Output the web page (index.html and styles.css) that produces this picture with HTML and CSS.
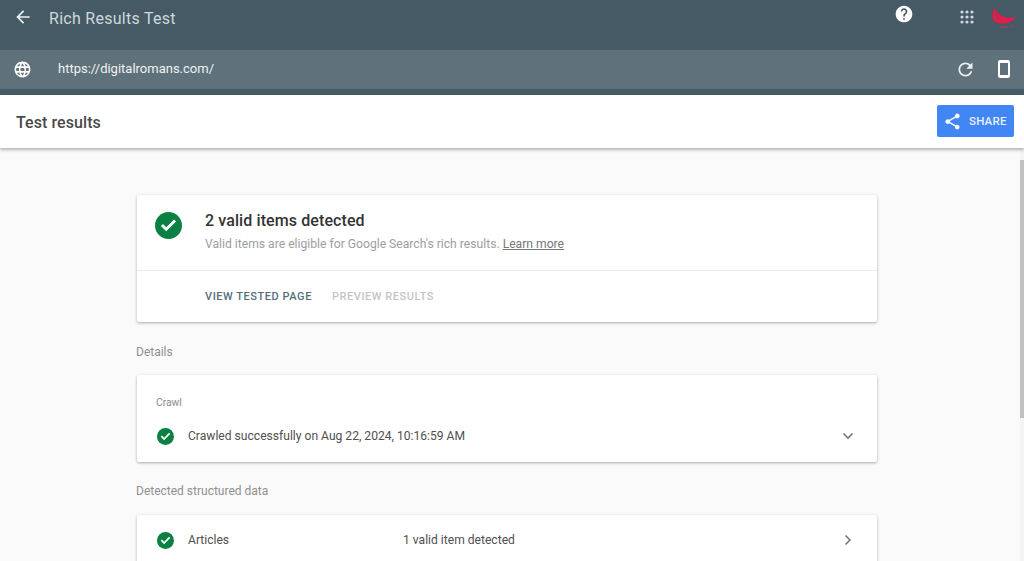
FILE: index.html
```html
<!DOCTYPE html>
<html lang="en">
<head>
<meta charset="utf-8">
<title>Rich Results Test</title>
<link rel="stylesheet" href="styles.css">
</head>
<body>
<header class="topbar">
  <div class="titlerow">
    <svg class="back" viewBox="0 0 24 24"><path d="M20 11H7.83l5.59-5.59L12 4l-8 8 8 8 1.41-1.41L7.83 13H20z"/></svg>
    <span class="apptitle">Rich Results Test</span>
    <span class="spacer"></span>
    <svg class="help" viewBox="0 0 24 24"><path d="M12 2C6.48 2 2 6.48 2 12s4.48 10 10 10 10-4.48 10-10S17.52 2 12 2zm1 17h-2v-2h2v2zm2.07-7.75l-.9.92C13.45 12.9 13 13.5 13 15h-2v-.5c0-1.1.45-2.1 1.17-2.83l1.24-1.26c.37-.36.59-.86.59-1.41 0-1.1-.9-2-2-2s-2 .9-2 2H8c0-2.21 1.79-4 4-4s4 1.79 4 4c0 .88-.36 1.68-.93 2.25z"/></svg>
    <svg class="apps" viewBox="0 0 14 14"><g><circle cx="2" cy="2" r="1.6"/><circle cx="7" cy="2" r="1.6"/><circle cx="12" cy="2" r="1.6"/><circle cx="2" cy="7" r="1.6"/><circle cx="7" cy="7" r="1.6"/><circle cx="12" cy="7" r="1.6"/><circle cx="2" cy="12" r="1.6"/><circle cx="7" cy="12" r="1.6"/><circle cx="12" cy="12" r="1.6"/></g></svg>
    <svg class="logo" viewBox="0 0 26 24"><path d="M4 1C1 5 0 11 4 15c4 2 10 2 13 1 3-1 6-3 8-6-4 1-8 1-11 0C10 9 6 6 4 1z" fill="#dc1f4b"/><path d="M5 6c1 3 3 6 6 8" stroke="#8c3a58" stroke-width=".7" fill="none"/><path d="M9 20h9M20 19h2" stroke="#c9375c" stroke-width="1.100" stroke-dasharray="1.500 .6" fill="none"/></svg>
  </div>
  <div class="urlrow">
    <svg class="globe" viewBox="0 0 24 24"><path d="M11.99 2C6.47 2 2 6.48 2 12s4.47 10 9.99 10C17.52 22 22 17.52 22 12S17.52 2 11.99 2zm6.93 6h-2.95c-.32-1.25-.78-2.45-1.38-3.56 1.84.63 3.37 1.91 4.33 3.56zM12 4.04c.83 1.2 1.48 2.53 1.91 3.96h-3.82c.43-1.43 1.08-2.76 1.91-3.96zM4.26 14C4.1 13.36 4 12.69 4 12s.1-1.36.26-2h3.38c-.08.66-.14 1.32-.14 2s.06 1.34.14 2H4.26zm.82 2h2.95c.32 1.25.78 2.45 1.38 3.56-1.84-.63-3.37-1.9-4.33-3.56zm2.95-8H5.08c.96-1.66 2.49-2.93 4.33-3.56C8.81 5.55 8.35 6.75 8.03 8zM12 19.96c-.83-1.2-1.48-2.53-1.91-3.96h3.82c-.43 1.43-1.08 2.76-1.91 3.96zM14.34 14H9.66c-.09-.66-.16-1.32-.16-2s.07-1.35.16-2h4.68c.09.65.16 1.32.16 2s-.07 1.34-.16 2zm.25 5.56c.6-1.11 1.06-2.31 1.38-3.56h2.95c-.96 1.65-2.49 2.93-4.33 3.56zM16.36 14c.08-.66.14-1.32.14-2s-.06-1.34-.14-2h3.38c.16.64.26 1.31.26 2s-.1 1.36-.26 2h-3.38z"/></svg>
    <span class="url">https://digitalromans.com/</span>
    <span class="spacer"></span>
    <svg class="reload" viewBox="0 0 24 24"><path d="M17.65 6.35C16.2 4.9 14.21 4 12 4c-4.42 0-7.99 3.58-7.99 8s3.57 8 7.99 8c3.73 0 6.84-2.55 7.73-6h-2.08c-.82 2.33-3.04 4-5.65 4-3.31 0-6-2.69-6-6s2.69-6 6-6c1.66 0 3.14.69 4.22 1.78L13 11h7V4l-2.35 2.35z"/></svg>
    <svg class="phone" viewBox="0 0 12 18"><path d="M10 0H2C.9 0 0 .9 0 2v14c0 1.100.9 2 2 2h8c1.100 0 2-.9 2-2V2c0-1.100-.9-2-2-2zm0 15H2V3h8v12z"/></svg>
  </div>
</header>
<section class="resultsbar">
  <h1 class="resultstitle">Test results</h1>
  <button class="share">
    <svg class="shareicon" viewBox="0 0 24 24"><path d="M18 16.08c-.76 0-1.44.3-1.96.77L8.910 12.700c.05-.23.09-.46.09-.7s-.04-.47-.09-.7l7.050-4.110c.54.5 1.250.81 2.040.81 1.660 0 3-1.340 3-3s-1.340-3-3-3-3 1.340-3 3c0 .24.040.47.090.7L8.040 9.810C7.500 9.310 6.790 9 6 9c-1.660 0-3 1.340-3 3s1.340 3 3 3c.79 0 1.500-.31 2.040-.81l7.120 4.160c-.05.21-.08.43-.08.65 0 1.610 1.310 2.920 2.920 2.920s2.920-1.310 2.920-2.920-1.310-2.920-2.920-2.920z"/></svg>
    <span>SHARE</span>
  </button>
</section>
<main class="content">
  <div class="scroller">
    <div class="column">
      <section class="card summary">
        <div class="summarytop">
          <svg class="check big" viewBox="0 0 24 24"><circle cx="12" cy="12" r="12" fill="#0b8043"/><path d="M10 17.200 5.300 12.500l1.800-1.800 2.900 2.900 6.900-6.900 1.800 1.800z" fill="#fff"/></svg>
          <div>
            <h2 class="summaryhead">2 valid items detected</h2>
            <p class="summarysub">Valid items are eligible for Google Search's rich results. <a class="learn">Learn more</a></p>
          </div>
        </div>
        <div class="summaryactions">
          <span class="action">VIEW TESTED PAGE</span>
          <span class="action off">PREVIEW RESULTS</span>
        </div>
      </section>
      <h3 class="sectionlabel">Details</h3>
      <section class="card crawl">
        <div class="crawllabel">Crawl</div>
        <div class="row">
          <svg class="check" viewBox="0 0 24 24"><circle cx="12" cy="12" r="12" fill="#0b8043"/><path d="M10 17.200 5.300 12.500l1.800-1.800 2.900 2.900 6.900-6.900 1.800 1.800z" fill="#fff"/></svg>
          <span class="rowtext">Crawled successfully on Aug 22, 2024, 10:16:59 AM</span>
          <svg class="chev" viewBox="0 0 12 12"><path d="M1.500 3.500 6 8l4.500-4.500"/></svg>
        </div>
      </section>
      <h3 class="sectionlabel second">Detected structured data</h3>
      <section class="card item">
        <div class="row">
          <svg class="check" viewBox="0 0 24 24"><circle cx="12" cy="12" r="12" fill="#0b8043"/><path d="M10 17.200 5.300 12.500l1.800-1.800 2.900 2.900 6.900-6.900 1.800 1.800z" fill="#fff"/></svg>
          <span class="rowtext name">Articles</span>
          <span class="rowtext count">1 valid item detected</span>
          <svg class="chev" viewBox="0 0 12 12"><path d="M3.500 1.500 8 6l-4.500 4.500"/></svg>
        </div>
      </section>
    </div>
  </div>
  <div class="track"><div class="thumb"></div></div>
</main>
</body>
</html>
```
FILE: styles.css
```css
* { box-sizing: border-box; }
html, body { height: 100%; }
body {
  margin: 0;
  height: 561px;
  overflow: hidden;
  display: flex;
  flex-direction: column;
  font-family: Roboto, "Liberation Sans", sans-serif;
  background: #fafafa;
  color: #3c4043;
}
h1, h2, h3, p { margin: 0; font-weight: 400; }
.spacer { flex: 1; }

.topbar {
  height: 95px;
  flex: none;
  background: #455a64;
  padding-bottom: 6px;
  display: flex;
  flex-direction: column;
}
.titlerow {
  height: 50px;
  flex: none;
  display: flex;
  align-items: flex-start;
  padding: 0 7px 0 13px;
}
.back { width: 20px; height: 20px; margin-top: 7px; fill: #eceff1; }
.apptitle { margin: 8px 0 0 16px; font-size: 16px; line-height: 21px; color: #cfd8dc; letter-spacing: .28px; }
.help { width: 20px; height: 20px; margin-top: 4px; fill: #fff; }
.apps { width: 14px; height: 14px; margin: 10px 0 0 46px; fill: #cfd8dc; }
.logo { width: 26px; height: 24px; margin: 7px 0 0 17px; }

.urlrow {
  flex: 1;
  display: flex;
  align-items: center;
  background: #5f717b;
  padding: 0 14px 0 13px;
}
.globe { width: 19px; height: 19px; fill: #fff; }
.url { margin: 0 0 2px 26px; font-size: 13px; color: #eef1f2; }
.reload { width: 21px; height: 21px; fill: #eceff1; margin: 0 22px 0 0; }
.phone { width: 12px; height: 18px; margin-bottom: 2px; fill: #fff; }

.resultsbar {
  height: 53px;
  flex: none;
  background: #fff;
  display: flex;
  align-items: center;
  justify-content: space-between;
  padding: 0 10px 1px 16px;
  box-shadow: 0 2px 3px rgba(0,0,0,.28);
  position: relative;
  z-index: 1;
}
.resultstitle { font-size: 16px; font-weight: 500; color: #4a4a4a; margin-top: 3px; letter-spacing: .08px; }
.share {
  width: 77px;
  height: 32px;
  border: 0;
  border-radius: 2px;
  background: #4285f4;
  color: #e8f0fe;
  font: 500 11.500px Roboto, sans-serif;
  letter-spacing: .2px;
  display: flex;
  align-items: center;
  padding: 0 0 0 6px;
  gap: 7px;
}
.shareicon { width: 19px; height: 19px; fill: #fff; }

.content { flex: 1; min-height: 0; display: flex; overflow: hidden; }
.scroller { flex: 1; min-width: 0; padding: 47px 0 0 137px; }
.column { width: 740px; }
.card {
  background: #fff;
  border-radius: 2px;
  box-shadow: 0 1px 3px rgba(0,0,0,.32);
}
.summarytop {
  height: 76px;
  display: flex;
  gap: 23px;
  padding: 16px 0 0 18px;
  border-bottom: 1px solid #eaeaea;
}
.check { width: 17px; height: 17px; flex: none; }
.check.big { width: 27px; height: 27px; margin-top: 1px; }
.summaryhead { font-size: 16px; font-weight: 500; line-height: 19px; color: #333; letter-spacing: .1px; }
.summarysub { font-size: 12.150px; line-height: 16px; margin-top: 6px; color: #9e9e9e; }
.learn { color: #777; text-decoration: underline; }
.summaryactions { height: 51px; display: flex; align-items: center; gap: 20px; padding-left: 68px; }
.action { font-size: 11px; font-weight: 500; letter-spacing: .55px; color: #546e7a; }
.action.off { color: #c4c4c4; }

.sectionlabel { margin: 22px 0 15px -1px; font-size: 12px; line-height: 16px; color: #909090; }
.sectionlabel.second { margin: 21px 0 16px -1px; }
.crawl { height: 87px; padding-top: 21px; }
.crawllabel { font-size: 10.300px; line-height: 14px; color: #8a8a8a; padding-left: 19px; }
.row { display: flex; align-items: center; padding: 0 23px 0 20px; }
.crawl .row { margin-top: 17px; height: 18px; }
.item { height: 60px; padding-top: 16px; }
.item .row { height: 18px; }
.rowtext { font-size: 12.100px; color: #4f4f4f; margin-left: 14px; flex: 1; }
.name { flex: none; width: 201px; }
.chev { width: 12px; height: 12px; fill: none; stroke: #777; stroke-width: 1.600; flex: none; }

.track { width: 4px; flex: none; background: #f4f4f4; }
.thumb { height: 258px; margin-top: 12px; background: #c1c1c1; }
```
